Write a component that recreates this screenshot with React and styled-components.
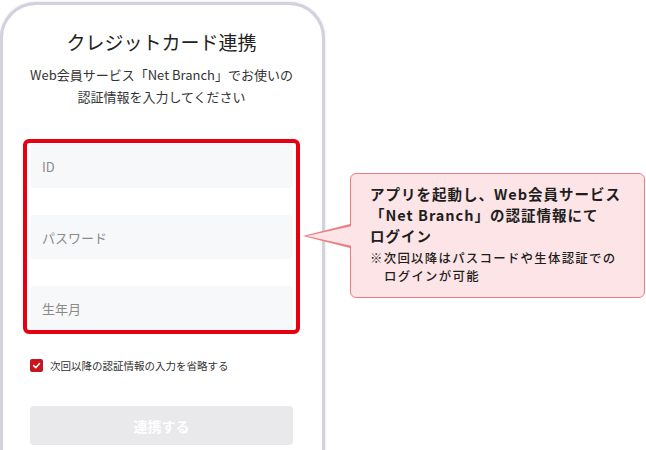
import React from "react";
import styled, { createGlobalStyle } from "styled-components";

const GlobalStyle = createGlobalStyle`
  html, body {
    margin: 0;
    padding: 0;
    background: #fff;
    overflow: hidden;
  }
  body {
    font-family: "Noto Sans CJK JP", "Noto Sans", sans-serif;
  }
`;

const Page = styled.div`
  display: flex;
  align-items: flex-start;
  width: 646px;
  height: 450px;
  overflow: hidden;
`;

const Phone = styled.div`
  flex-shrink: 0;
  box-sizing: border-box;
  width: 325px;
  height: 480px;
  margin-top: 2px;
  padding: 23px 22px 0 20px;
  border: 3px solid #d2d2df;
  border-bottom: none;
  border-radius: 36px 36px 0 0;
  box-shadow: 0 0 2px rgba(170, 170, 200, 0.6);
  background: #fff;
`;

const Title = styled.h1`
  margin: 0;
  font-size: 19px;
  line-height: 28px;
  font-weight: 400;
  color: #222;
  text-align: center;
`;

const Lead = styled.p`
  margin: 8px 0 0;
  font-size: 13px;
  line-height: 22px;
  color: #333;
  text-align: center;
`;

const Highlight = styled.div`
  display: flex;
  flex-direction: column;
  gap: 27px;
  margin-top: 31px;
  padding: 1px 3px 0;
  border: 4px solid #e60012;
  border-radius: 6px;
`;

const Field = styled.div`
  display: flex;
  align-items: center;
  height: 44px;
  padding-left: 12px;
  border-radius: 4px;
  background: #f7f8fa;
  font-size: 13px;
  color: #8a8a8a;
`;

const CheckRow = styled.label`
  display: flex;
  align-items: center;
  gap: 7px;
  height: 18px;
  margin: 22px 0 0 7px;
  font-size: 10.5px;
  color: #333;
`;

const Box = styled.span`
  display: flex;
  align-items: center;
  justify-content: center;
  width: 13px;
  height: 13px;
  border-radius: 2px;
  background: #c8161e;
`;

const SubmitButton = styled.button`
  display: block;
  width: calc(100% - 14px);
  height: 39px;
  margin: 32px 7px 0;
  border: none;
  border-radius: 4px;
  background: #e9e9eb;
  color: #fff;
  font-family: inherit;
  font-size: 14px;
  font-weight: 700;
`;

const Callout = styled.div`
  position: relative;
  box-sizing: border-box;
  width: 295px;
  margin: 173px 0 0 25px;
  padding: 9px 8px 12px 19px;
  border: 1.5px solid #ef7c82;
  border-radius: 6px;
  background: #fde4e6;
  color: #1e1e1e;

  &::before,
  &::after {
    content: "";
    position: absolute;
    width: 0;
    height: 0;
    border-style: solid;
    border-color: transparent;
  }
  &::before {
    left: -48px;
    top: 50px;
    border-width: 12px 47px 12px 0;
    border-right-color: #ef7c82;
  }
  &::after {
    left: -44px;
    top: 52px;
    border-width: 10px 45px 10px 0;
    border-right-color: #fde4e6;
  }
`;

const CalloutMain = styled.p`
  margin: 0;
  font-size: 14.5px;
  line-height: 21px;
  font-weight: 700;
  letter-spacing: 1px;
`;

const CalloutNote = styled.p`
  margin: 3px 0 0;
  padding-left: 14px;
  text-indent: -14px;
  font-size: 12.4px;
  line-height: 18px;
  font-weight: 500;
  letter-spacing: 1.3px;
  white-space: nowrap;
`;

const Tick = () => (
  <svg width="9" height="9" viewBox="0 0 10 10">
    <path d="M1.8 5.2 L4.2 7.4 L8.3 2.8" fill="none" stroke="#fff" strokeWidth="1.7" strokeLinecap="round" strokeLinejoin="round" />
  </svg>
);

export default function App() {
  return (
    <Page>
      <GlobalStyle />
      <Phone>
        <Title>クレジットカード連携</Title>
        <Lead>
          Web会員サービス「Net Branch」でお使いの
          <br />
          認証情報を入力してください
        </Lead>
        <Highlight>
          <Field>ID</Field>
          <Field>パスワード</Field>
          <Field>生年月</Field>
        </Highlight>
        <CheckRow>
          <Box>
            <Tick />
          </Box>
          次回以降の認証情報の入力を省略する
        </CheckRow>
        <SubmitButton>連携する</SubmitButton>
      </Phone>
      <Callout>
        <CalloutMain>
          アプリを起動し、Web会員サービス
          <br />
          「Net Branch」の認証情報にて
          <br />
          ログイン
        </CalloutMain>
        <CalloutNote>
          ※次回以降はパスコードや生体認証での
          <br />
          ログインが可能
        </CalloutNote>
      </Callout>
    </Page>
  );
}
